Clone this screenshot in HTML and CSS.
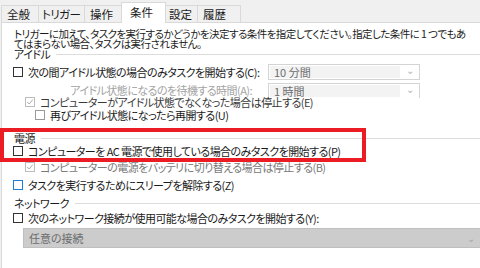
FILE: index.html
```html
<!DOCTYPE html>
<html lang="ja">
<head>
    <meta charset="UTF-8">
    <title>条件</title>
    <link rel="stylesheet" href="styles.css">
</head>
<body>
<div class="dialog">
    <div class="tabs">
        <div class="tab">全般</div>
        <div class="tab">トリガー</div>
        <div class="tab">操作</div>
        <div class="tab active">条件</div>
        <div class="tab">設定</div>
        <div class="tab">履歴</div>
    </div>

    <div class="panel">
        <p class="desc">トリガーに加えて、タスクを実行するかどうかを決定する条件を指定してください。指定した条件に 1 つでもあ<br>てはまらない場合、タスクは実行されません。</p>

        <div class="group-title">アイドル</div>
        <div class="opt-row row-c">
            <label class="opt"><span class="cb"></span>次の間アイドル状態の場合のみタスクを開始する(C):</label>
            <div class="combo"><span class="combo-text">10 分間</span><span class="chev">&#8964;</span></div>
        </div>
        <div class="opt-row row-a">
            <span class="wait-label">アイドル状態になるのを待機する時間(A):</span>
            <div class="combo combo-cut"><span class="combo-text">1 時間</span><span class="chev">&#8964;</span></div>
        </div>
        <label class="opt sub row-e"><span class="cb checked"><svg viewBox="0 0 10 10"><polyline points="1.5,5 4,7.5 8.5,2"/></svg></span>コンピューターがアイドル状態でなくなった場合は停止する(E)</label>
        <label class="opt subsub row-u"><span class="cb light"></span>再びアイドル状態になったら再開する(U)</label>

        <div class="group-title power">電源</div>
        <label class="opt row-p"><span class="cb"></span>コンピューターを AC 電源で使用している場合のみタスクを開始する(P)</label>
        <label class="opt sub gray row-b"><span class="cb checked"><svg viewBox="0 0 10 10"><polyline points="1.5,5 4,7.5 8.5,2"/></svg></span>コンピューターの電源をバッテリに切り替える場合は停止する(B)</label>
        <label class="opt row-z"><span class="cb focus"></span>タスクを実行するためにスリープを解除する(Z)</label>

        <div class="group-title net">ネットワーク</div>
        <label class="opt row-y"><span class="cb"></span>次のネットワーク接続が使用可能な場合のみタスクを開始する(Y):</label>
        <div class="select"><span>任意の接続</span><span class="chev">&#8964;</span></div>
    </div>

    <div class="highlight"></div>
</div>
</body>
</html>
```

FILE: styles.css
```css
body {
    margin: 0;
    font-family: "Noto Sans CJK JP", "Noto Sans", sans-serif;
    font-size: 11px;
    font-feature-settings: "palt";
    letter-spacing: -0.55px;
    color: #1a1a1a;
    background: #ffffff;
}

.dialog {
    position: relative;
    width: 480px;
    height: 268px;
    overflow: hidden;
    background: #f0f0f0;
}

/* tab strip */
.tabs {
    display: flex;
    align-items: flex-end;
    height: 22px;
    padding-left: 2px;
}

.tab {
    height: 17px;
    line-height: 16px;
    padding-left: 5px;
    margin-left: -1px;
    border: 1px solid #d9d9d9;
    border-bottom: none;
    box-sizing: border-box;
    background: #f0f0f0;
    font-size: 11.5px;
    letter-spacing: 0;
    white-space: nowrap;
}

.tab:nth-child(1) { width: 38px; }
.tab:nth-child(2) { width: 47px; padding-left: 3px; letter-spacing: -0.6px; }
.tab:nth-child(3) { width: 40px; }
.tab:nth-child(5) { width: 35px; }
.tab:nth-child(6) { width: 44px; }

.tab.active {
    position: relative;
    width: 45px;
    height: 21px;
    line-height: 19px;
    margin: 0 -2px -1px -3px;
    padding-left: 8px;
    background: #ffffff;
    z-index: 1;
}

/* page */
.panel {
    height: 246px;
    margin-left: 1px;
    border-top: 1px solid #d9d9d9;
    border-left: 1px solid #d9d9d9;
    background: #ffffff;
    box-sizing: border-box;
}

.desc {
    margin: 0;
    padding: 6px 0 0 12px;
    font-size: 10.5px;
    line-height: 10px;
    white-space: nowrap;
}

.group-title {
    display: flex;
    align-items: center;
    gap: 6px;
    height: 10px;
    padding-left: 12px;
    line-height: 10px;
}

.group-title::after {
    content: "";
    flex: 1;
    height: 1px;
    background: #dcdcdc;
}

.opt {
    display: flex;
    align-items: center;
    gap: 5px;
    height: 10px;
    padding-left: 11px;
    white-space: nowrap;
}

.opt.sub { padding-left: 23px; }
.opt.subsub { padding-left: 33px; }
.opt.sub:not(.gray) { color: #3a3a3a; }
.opt.gray { color: #7a7a7a; }

.cb {
    flex: 0 0 auto;
    width: 10px;
    height: 10px;
    border: 1px solid #333333;
    box-sizing: border-box;
    background: #ffffff;
}

.cb.light { border-color: #9a9a9a; }
.cb.focus { border-color: #1a7fd6; }
.cb.checked { border-color: #bcbcbc; }

.cb svg {
    display: block;
    width: 8px;
    height: 8px;
    fill: none;
    stroke: #a8a8a8;
    stroke-width: 1.2;
}

.opt-row {
    display: grid;
    grid-template-columns: 266px 152px;
    align-items: center;
}

.opt-row .opt { padding-left: 11px; }

.row-c { margin-top: 5px; height: 16px; }
.row-a { margin-top: 2px; height: 14px; }
.row-e { margin-top: 1px; }
.row-u { margin-top: 3px; }
.row-p { margin-top: 3px; }
.row-b { margin-top: 6px; }
.row-z { margin-top: 8px; }
.row-y { margin-top: 5px; }

.power { margin-top: 13px; }
.net { margin-top: 8px; }

.wait-label {
    padding-right: 16px;
    text-align: right;
    color: #a3a3a3;
    white-space: nowrap;
}

.combo {
    display: flex;
    align-items: stretch;
    height: 16px;
    border: 1px solid #d4d4d4;
    box-sizing: border-box;
    background: #ffffff;
    color: #6d6d6d;
    letter-spacing: 0;
}

.combo-cut {
    height: 15px;
    border-bottom: none;
}

.combo-text {
    flex: 1;
    margin: 1px 0 1px 1px;
    padding-left: 4px;
    background: #f3f3f3;
    line-height: 13px;
}

.chev {
    width: 19px;
    text-align: center;
    color: #b5b5b5;
    font-size: 10px;
    line-height: 10px;
}

.select {
    display: flex;
    align-items: center;
    justify-content: space-between;
    height: 20px;
    margin: 5px -4px 0 21px;
    padding: 0 8px 0 5px;
    border: 1px solid #bfbfbf;
    box-sizing: border-box;
    background: #cccccc;
    color: #6d6d6d;
    letter-spacing: 0;
}

.select .chev {
    width: auto;
    color: #a8a8a8;
}

/* red annotation box */
.highlight {
    position: absolute;
    left: 0;
    top: 128px;
    width: 366px;
    height: 34px;
    border: 4px solid #ec1c24;
    box-sizing: border-box;
}
```
